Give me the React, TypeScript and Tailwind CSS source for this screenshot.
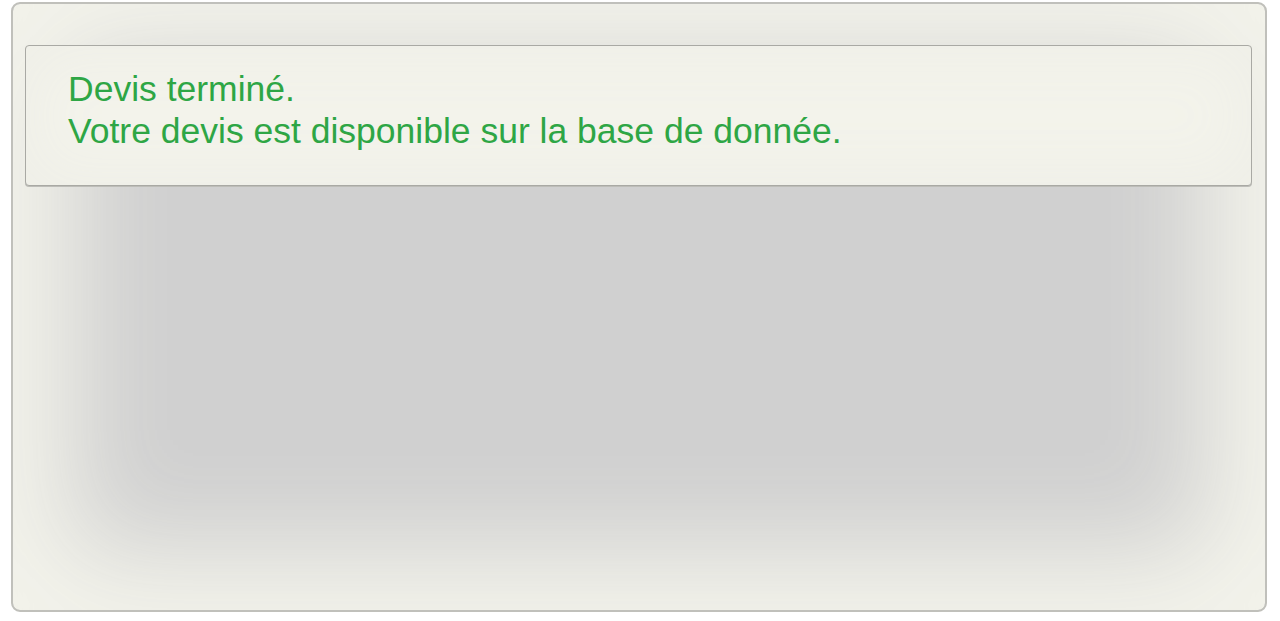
export default function App() {
  return (
    <div className="w-[1280px] h-[621px] bg-white pl-[11px] pr-[13px] pt-[2px] pb-[9px]" style={{ fontFamily: '"Liberation Sans", Arial, sans-serif' }}>
      <div className="h-full rounded-[9px] border-2 border-[#c0c0bb] bg-[#d0d0d0] shadow-[inset_0_0_100px_60px_#f3f3eb] pl-[12px] pr-[13px] pt-[41px]">
        <div className="h-[141px] rounded-[4px] border border-[#a9a9a4] bg-[#f3f3eb] shadow-[0_1px_0_#bdbdb8,inset_0_0_60px_10px_#efefe8] pl-[42px] pt-[22px]">
          <p className="text-[35.5px] leading-[42px] text-[#2ea645]">Devis terminé.</p>
          <p className="text-[35.5px] leading-[42px] text-[#2ea645]">Votre devis est disponible sur la base de donnée.</p>
        </div>
      </div>
    </div>
  );
}
